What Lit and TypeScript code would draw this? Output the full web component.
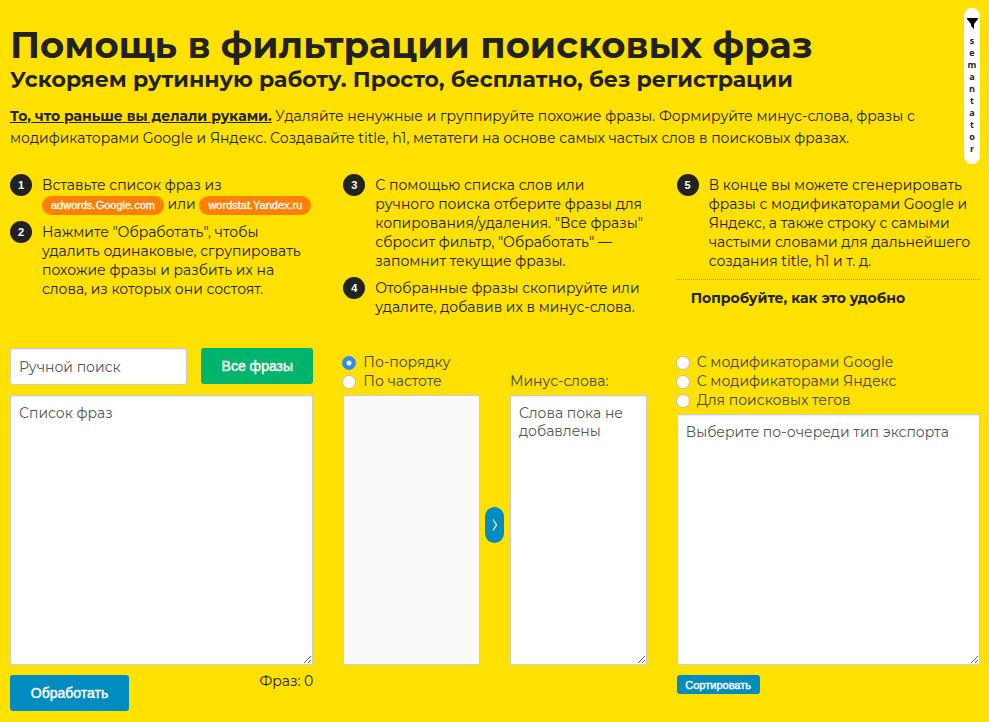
import { LitElement, html, css, svg } from "lit";
import { customElement, state } from "lit/decorators.js";

const BRAND = "semantator";

const EXPORT_TYPES = [
  "С модификаторами Google",
  "С модификаторами Яндекс",
  "Для поисковых тегов",
];

const SORT_ORDERS = ["По-порядку", "По частоте"];

const funnel = svg`<path d="M0 0h11v1L7 6v5L4 8V6L0 1z" fill="#000"/>`;

@customElement("app-root")
export class AppRoot extends LitElement {
  @state() private order = 0;
  @state() private exportType = -1;

  static styles = css`
    :host {
      display: block;
      box-sizing: border-box;
      position: relative;
      min-height: 100vh;
      padding: 23px 9px 11px 10px;
      background: #ffe100;
      color: #222;
      font-family: Montserrat, Inter, sans-serif;
      font-size: 14px;
      line-height: 19px;
    }
    * {
      box-sizing: border-box;
    }
    h1,
    h2,
    p,
    ol {
      margin: 0;
      padding: 0;
    }
    h1 {
      font-size: 37px;
      line-height: 44px;
      font-weight: 700;
    }
    h2 {
      font-size: 22px;
      line-height: 26px;
      font-weight: 700;
    }
    .intro {
      margin-top: 12px;
      line-height: 22px;
    }
    .lead {
      text-decoration: underline;
    }
    .columns {
      display: grid;
      grid-template-columns: repeat(3, minmax(0, 1fr));
      column-gap: 30px;
    }
    .guide {
      margin-top: 25px;
      white-space: nowrap;
    }
    .steps {
      list-style: none;
      display: grid;
      align-content: start;
      row-gap: 6px;
    }
    .step {
      display: flex;
      gap: 10px;
    }
    .num {
      flex: none;
      width: 22px;
      height: 22px;
      border-radius: 50%;
      background: #222;
      color: #fff;
      font: 700 11px/22px "Liberation Sans", sans-serif;
      text-align: center;
    }
    .text {
      padding-top: 2px;
    }
    .source {
      display: inline-block;
      margin-top: 1px;
      padding: 0 9px;
      border-radius: 10px;
      background: #ff8000;
      color: #fff;
      font: 11px/19px "Liberation Sans", sans-serif;
      -webkit-text-stroke: 0.3px #fff;
      text-decoration: none;
      vertical-align: top;
    }
    .try {
      margin-top: 8px;
      padding: 9px 14px 0;
      border-top: 1px dotted #a89500;
      font-weight: 700;
    }
    .tools {
      margin-top: 31px;
    }
    .col {
      display: flex;
      flex-direction: column;
    }
    .search {
      display: flex;
      gap: 14px;
      height: 47px;
      align-items: flex-start;
    }
    input.query {
      flex: 1;
      min-width: 0;
      height: 37px;
      padding: 0 8px;
      border: 1px solid #ccc;
      border-radius: 3px;
      background: #fff;
      box-shadow: inset 0 1px 2px rgba(0, 0, 0, 0.1);
      font: inherit;
      color: #222;
    }
    textarea {
      display: block;
      width: 100%;
      height: 270px;
      margin: 0;
      padding: 8px;
      border: 1px solid #ccc;
      border-radius: 0;
      background: #fff;
      box-shadow: inset 0 1px 2px rgba(0, 0, 0, 0.1);
      font: inherit;
      line-height: 18px;
      color: #222;
      resize: vertical;
    }
    ::placeholder {
      color: #555;
      opacity: 1;
    }
    button {
      margin: 0;
      padding: 0;
      border: 0;
      border-radius: 3px;
      background: #008cc0;
      color: #fff;
      font-family: "Liberation Sans", sans-serif;
      font-size: 14px;
      -webkit-text-stroke: 0.4px #fff;
      cursor: pointer;
    }
    button.all {
      height: 36px;
      width: 112px;
      background: #00b56b;
    }
    button.process {
      height: 36px;
      width: 119px;
    }
    button.sort {
      height: 19px;
      width: 83px;
      font-size: 11px;
    }
    .phrases {
      display: grid;
      grid-template-columns: minmax(0, 1fr) 30px minmax(0, 1fr);
      grid-template-rows: 47px auto;
    }
    .radios {
      margin-left: -1px;
      padding-top: 5px;
      color: #444;
      white-space: nowrap;
    }
    .option {
      display: flex;
      align-items: center;
      gap: 7px;
    }
    .option input {
      appearance: none;
      flex: none;
      width: 14px;
      height: 14px;
      margin: 0;
      border: 1px solid #bbb;
      border-radius: 50%;
      background: #fff;
    }
    .option input:checked {
      border-color: #2a8cf8;
      background: radial-gradient(circle, #fff 2px, #2a8cf8 3px);
    }
    .minus-label {
      grid-column: 3;
      padding-top: 24px;
      color: #444;
      white-space: nowrap;
    }
    .words {
      height: 270px;
      border: 1px solid #ccc;
      background: #fafafa;
    }
    button.move {
      align-self: center;
      justify-self: center;
      width: 19px;
      height: 36px;
      margin-bottom: 10px;
      border-radius: 10px;
      line-height: 0;
    }
    .export .radios {
      padding-bottom: 4px;
    }
    .export textarea {
      flex: 1;
    }
    .actions {
      margin-top: 10px;
      align-items: start;
    }
    .process-row {
      display: flex;
      justify-content: space-between;
      align-items: flex-start;
    }
    .total {
      line-height: 13px;
    }
    .export-row {
      grid-column: 3;
      display: flex;
    }
    .brand {
      position: absolute;
      top: 8px;
      right: 9px;
      width: 16px;
      height: 156px;
      padding-top: 10px;
      border-radius: 8px;
      background: #fff;
      color: #222;
      font: 700 9px/12px "Open Sans", sans-serif;
      text-align: center;
      text-decoration: none;
    }
    .brand svg {
      display: block;
      margin: 0 auto 6px;
    }
    .letter {
      display: block;
    }
  `;

  private radios(
    name: string,
    labels: string[],
    selected: number,
    pick: (i: number) => void
  ) {
    return html`<div class="radios">
      ${labels.map(
        (label, i) => html`<label class="option">
          <input
            type="radio"
            name=${name}
            .checked=${selected === i}
            @change=${() => pick(i)}
          />${label}</label
        >`
      )}
    </div>`;
  }

  render() {
    return html`
      <a class="brand" href="#" aria-label=${BRAND}>
        <svg width="11" height="11" viewBox="0 0 11 11">${funnel}</svg>
        ${[...BRAND].map((c) => html`<span class="letter">${c}</span>`)}
      </a>

      <header>
        <h1>Помощь в фильтрации поисковых фраз</h1>
        <h2>Ускоряем рутинную работу. Просто, бесплатно, без регистрации</h2>
        <p class="intro">
          <strong class="lead">То, что раньше вы делали руками.</strong>
          Удаляйте ненужные и группируйте похожие фразы. Формируйте минус-слова,
          фразы с<br />модификаторами Google и Яндекс. Создавайте title, h1,
          метатеги на основе самых частых слов в поисковых фразах.
        </p>
      </header>

      <section class="columns guide">
        <ol class="steps">
          <li class="step">
            <span class="num">1</span>
            <div class="text">
              Вставьте список фраз из<br /><a class="source" href="#"
                >adwords.Google.com</a
              >
              или <a class="source" href="#">wordstat.Yandex.ru</a>
            </div>
          </li>
          <li class="step">
            <span class="num">2</span>
            <div class="text">
              Нажмите "Обработать", чтобы<br />удалить одинаковые,
              сгрупировать<br />похожие фразы и разбить их на<br />слова, из
              которых они состоят.
            </div>
          </li>
        </ol>
        <ol class="steps" start="3">
          <li class="step">
            <span class="num">3</span>
            <div class="text">
              С помощью списка слов или<br />ручного поиска отберите фразы
              для<br />копирования/удаления. "Все фразы"<br />сбросит фильтр,
              "Обработать" —<br />запомнит текущие фразы.
            </div>
          </li>
          <li class="step">
            <span class="num">4</span>
            <div class="text">
              Отобранные фразы скопируйте или<br />удалите, добавив их в
              минус-слова.
            </div>
          </li>
        </ol>
        <div>
          <ol class="steps" start="5">
            <li class="step">
              <span class="num">5</span>
              <div class="text">
                В конце вы можете сгенерировать<br />фразы с модификаторами
                Google и<br />Яндекс, а также строку с самыми<br />частыми
                словами для дальнейшего<br />создания title, h1 и т. д.
              </div>
            </li>
          </ol>
          <p class="try">Попробуйте, как это удобно</p>
        </div>
      </section>

      <section class="columns tools">
        <div class="col">
          <div class="search">
            <input
              class="query"
              type="text"
              placeholder="Ручной поиск"
              aria-label="Ручной поиск"
            />
            <button class="all" type="button">Все фразы</button>
          </div>
          <textarea placeholder="Список фраз" aria-label="Список фраз"></textarea>
        </div>

        <div class="phrases">
          ${this.radios("order", SORT_ORDERS, this.order, (i) => (this.order = i))}
          <label class="minus-label" for="minus">Минус-слова:</label>
          <div class="words"></div>
          <button class="move" type="button" aria-label="Добавить в минус-слова">
            <svg width="6" height="12" viewBox="0 0 6 12">
              <path
                d="M1 0.5L4.5 6L1 11.5"
                fill="none"
                stroke="#fff"
                stroke-width="1.3"
              />
            </svg>
          </button>
          <textarea id="minus" placeholder="Слова пока не добавлены"></textarea>
        </div>

        <div class="col export">
          ${this.radios(
            "export",
            EXPORT_TYPES,
            this.exportType,
            (i) => (this.exportType = i)
          )}
          <textarea
            placeholder="Выберите по-очереди тип экспорта"
            aria-label="Экспорт"
          ></textarea>
        </div>
      </section>

      <section class="columns actions">
        <div class="process-row">
          <button class="process" type="button">Обработать</button>
          <span class="total">Фраз: 0</span>
        </div>
        <div class="export-row">
          <button class="sort" type="button">Сортировать</button>
        </div>
      </section>
    `;
  }
}
